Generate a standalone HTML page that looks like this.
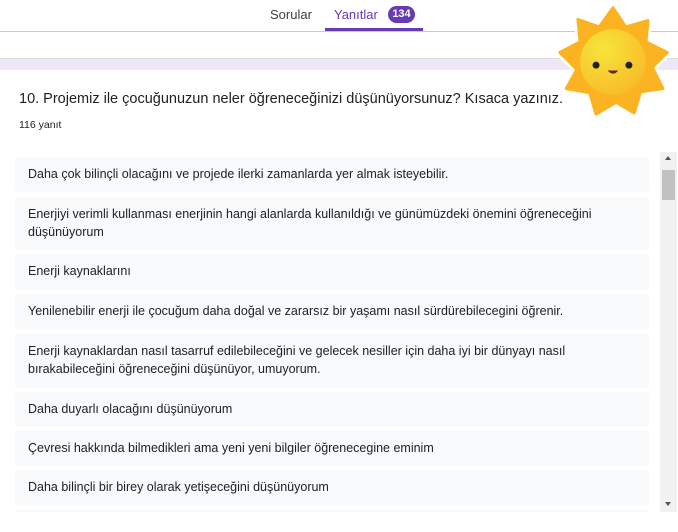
<!DOCTYPE html>
<html><head><meta charset="utf-8"><style>
body{margin:0;width:678px;height:532px;overflow:hidden;background:#fff;font-family:"Liberation Sans",Arial,sans-serif;position:relative;color:#202124}
.top{position:absolute;left:0;top:0;width:678px;height:31px;border-bottom:1px solid #c8c8c8;background:#fff}
.tab{position:absolute;top:7px;font-size:13px}
.ul{position:absolute;left:325px;top:28px;width:98px;height:3px;background:#673ab7}
.badge{position:absolute;left:388px;top:6px;width:27px;height:17px;border-radius:9px;background:#673ab7;color:#fff;font-size:11px;font-weight:bold;text-align:center;line-height:17px}
.strip{position:absolute;left:0;top:58px;width:678px;height:11px;background:#ede7f6;border-top:1px solid #ddd}
.title{position:absolute;left:19px;top:91px;font-size:14.5px}
.cnt{position:absolute;left:19px;top:119px;font-size:10.5px}
.row{position:absolute;left:15px;width:634px;background:#f8f9fa;border-radius:4px;font-size:12.5px;line-height:18px;padding:8px 0 0 13px;box-sizing:border-box}
.sb{position:absolute;left:660px;top:152px;width:17px;height:360px;background:#f1f1f1}
.th{position:absolute;left:662px;top:170px;width:13px;height:30px;background:#c1c1c1}
</style></head><body>
<div class="top"></div>
<div class="tab" style="left:270px;color:#3c4043">Sorular</div>
<div class="tab" style="left:334px;color:#673ab7">Yanıtlar</div>
<div class="badge">134</div>
<div class="ul"></div>
<div class="strip"></div>
<div class="title">10. Projemiz ile çocuğunuzun neler öğreneceğinizi düşünüyorsunuz? Kısaca yazınız.</div>
<div class="cnt">116 yanıt</div>
<div class="row" style="top:157px;height:35px">Daha çok bilinçli olacağını ve projede ilerki zamanlarda yer almak isteyebilir.</div>
<div class="row" style="top:197px;height:53px">Enerjiyi verimli kullanması enerjinin hangi alanlarda kullanıldığı ve günümüzdeki önemini öğreneceğini<br>düşünüyorum</div>
<div class="row" style="top:254px;height:36px">Enerji kaynaklarını</div>
<div class="row" style="top:294px;height:35px">Yenilenebilir enerji ile çocuğum daha doğal ve zararsız bir yaşamı nasıl sürdürebilecegini öğrenir.</div>
<div class="row" style="top:334px;height:54px">Enerji kaynaklardan nasıl tasarruf edilebileceğini ve gelecek nesiller için daha iyi bir dünyayı nasıl<br>bırakabileceğini öğreneceğini düşünüyor, umuyorum.</div>
<div class="row" style="top:392px;height:35px">Daha duyarlı olacağını düşünüyorum</div>
<div class="row" style="top:431px;height:35px">Çevresi hakkında bilmedikleri ama yeni yeni bilgiler öğrenecegine eminim</div>
<div class="row" style="top:470px;height:35px">Daha bilinçli bir birey olarak yetişeceğini düşünüyorum</div>
<div class="row" style="top:510px;height:20px"></div>
<div style="position:absolute;left:0;top:512px;width:678px;height:20px;background:#fff"></div>
<div class="sb"></div><div class="th"></div>
<div style="position:absolute;left:665px;top:156px;border:3.5px solid transparent;border-bottom:4px solid #555;border-top:0"></div>
<div style="position:absolute;left:665px;top:502px;border:3.5px solid transparent;border-top:4px solid #555;border-bottom:0"></div>
<svg style="position:absolute;left:553px;top:2px" width="120" height="120" viewBox="-60 -60 120 120">
<defs><radialGradient id="g" cx="35%" cy="30%" r="80%"><stop offset="0" stop-color="#f7e53a"/><stop offset="1" stop-color="#f8b92a"/></radialGradient></defs>
<g transform="scale(1.06)">
<polygon points="0,-51 12,-33 33,-39 31,-19 51,-9 37,5 47,25 26,28 20,48 3,38 -16,49 -22,29 -44,25 -34,7 -50,-9 -31,-19 -33,-40 -13,-33" fill="#fff" stroke="#fff" stroke-width="8" stroke-linejoin="round"/>
<polygon points="0,-51 12,-33 33,-39 31,-19 51,-9 37,5 47,25 26,28 20,48 3,38 -16,49 -22,29 -44,25 -34,7 -50,-9 -31,-19 -33,-40 -13,-33" fill="#fbb321" stroke="#fbb321" stroke-width="3" stroke-linejoin="round"/>
<circle r="31" fill="url(#g)"/>
<circle cx="-16" cy="3" r="3.3" fill="#222"/><circle cx="15" cy="3" r="3.3" fill="#222"/>
<path d="M-5 8 Q0 14 5 8 Z" fill="#6b1f2a"/>
</g>
</svg>
</body></html>
